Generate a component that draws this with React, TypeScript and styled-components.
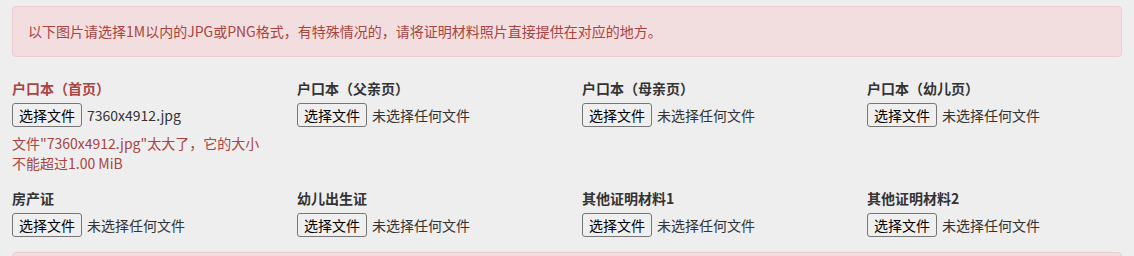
import * as React from "react";
import styled, { createGlobalStyle } from "styled-components";

const GlobalStyle = createGlobalStyle`
  html, body {
    margin: 0;
    padding: 0;
    background: #eeeeee;
  }
  body {
    font-family: "Noto Sans CJK SC", "Noto Sans", sans-serif;
    font-size: 14px;
    line-height: 20px;
    color: #333333;
  }
`;

interface Upload {
  label: string;
  fileName?: string;
  error?: string[];
}

const uploads: Array<Upload> = [
  {
    label: "户口本（首页）",
    fileName: "7360x4912.jpg",
    error: ["文件\"7360x4912.jpg\"太大了，它的大小", "不能超过1.00 MiB"],
  },
  { label: "户口本（父亲页）" },
  { label: "户口本（母亲页）" },
  { label: "户口本（幼儿页）" },
  { label: "房产证" },
  { label: "幼儿出生证" },
  { label: "其他证明材料1" },
  { label: "其他证明材料2" },
];

const Page = styled.div`
  padding: 6px 12px 0;
`;

const Alert = styled.div<{ $gap?: number }>`
  box-sizing: border-box;
  height: 51px;
  padding: 15px 15px;
  line-height: 19px;
  border: 1px solid #ebccd1;
  border-radius: 4px;
  background: #f2dede;
  color: #a94442;
  margin-bottom: ${(p) => p.$gap ?? 0}px;
`;

const Grid = styled.div`
  display: grid;
  grid-template-columns: repeat(4, 255px);
  column-gap: 30px;
  align-items: start;
`;

const FormGroup = styled.div`
  margin-bottom: 15px;
`;

const Label = styled.label<{ $error?: boolean }>`
  display: block;
  font-weight: bold;
  line-height: 20px;
  margin-bottom: 5px;
  color: ${(p) => (p.$error ? "#a94442" : "#333333")};
`;

const FileRow = styled.div`
  display: flex;
  align-items: center;
  gap: 5px;
  height: 24px;
`;

const PickButton = styled.button`
  box-sizing: border-box;
  height: 24px;
  padding: 0 6px;
  font-family: inherit;
  font-size: 14px;
  line-height: 20px;
  color: #000000;
  background: #efefef;
  border: 1px solid #767676;
  border-radius: 3px;
`;

const FileName = styled.span`
  color: #333333;
  white-space: nowrap;
`;

const HelpBlock = styled.div`
  margin-top: 6px;
  color: #a94442;
  line-height: 20px;
`;

const UploadField = ({ item }: { item: Upload }) => (
  <FormGroup>
    <Label $error={!!item.error}>{item.label}</Label>
    <FileRow>
      <PickButton type="button">选择文件</PickButton>
      <FileName>{item.fileName ?? "未选择任何文件"}</FileName>
    </FileRow>
    {item.error && (
      <HelpBlock>
        {item.error.map((line) => (
          <div key={line}>{line}</div>
        ))}
      </HelpBlock>
    )}
  </FormGroup>
);

export default function App() {
  return (
    <Page>
      <GlobalStyle />
      <Alert $gap={21}>
        以下图片请选择1M以内的JPG或PNG格式，有特殊情况的，请将证明材料照片直接提供在对应的地方。
      </Alert>
      <Grid>
        {uploads.map((item) => (
          <UploadField key={item.label} item={item} />
        ))}
      </Grid>
      <Alert />
    </Page>
  );
}
